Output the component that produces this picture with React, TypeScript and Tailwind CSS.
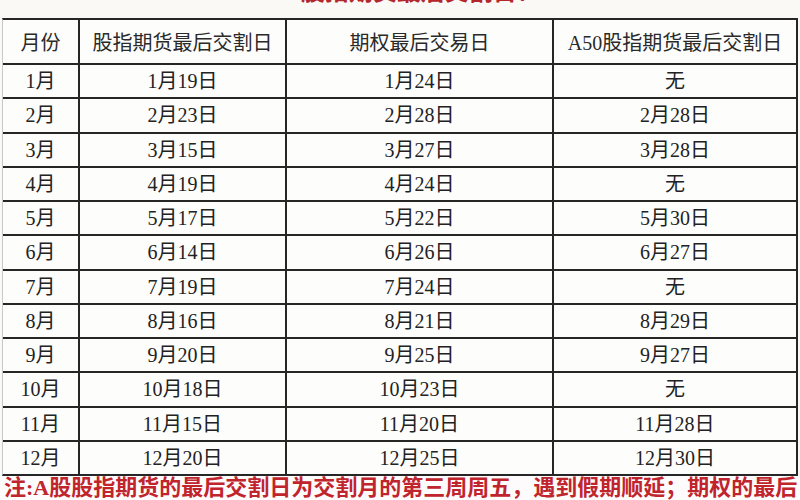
import React from "react";

const rows: [string, string, string, string][] = [
  ["1月", "1月19日", "1月24日", "无"],
  ["2月", "2月23日", "2月28日", "2月28日"],
  ["3月", "3月15日", "3月27日", "3月28日"],
  ["4月", "4月19日", "4月24日", "无"],
  ["5月", "5月17日", "5月22日", "5月30日"],
  ["6月", "6月14日", "6月26日", "6月27日"],
  ["7月", "7月19日", "7月24日", "无"],
  ["8月", "8月16日", "8月21日", "8月29日"],
  ["9月", "9月20日", "9月25日", "9月27日"],
  ["10月", "10月18日", "10月23日", "无"],
  ["11月", "11月15日", "11月20日", "11月28日"],
  ["12月", "12月20日", "12月25日", "12月30日"],
];

const headers = ["月份", "股指期货最后交割日", "期权最后交易日", "A50股指期货最后交割日"];

const serif = {
  fontFamily: '"Liberation Serif", "Noto Sans CJK SC", serif',
};

export default function App() {
  return (
    <div
      className="w-[800px] h-[500px] overflow-hidden bg-[#faf9f6] flex flex-col"
      style={serif}
    >
      <div className="h-[19px] overflow-hidden flex justify-center">
        <div className="mt-[-20px] text-[24px] leading-[24px] font-bold text-[#b3262c]">
          A50股指期货最后交割日？
        </div>
      </div>
      <div className="ml-[2px] w-[796px] border-l border-l-[#c8c8c8] border-t-2 border-r-2 border-b-2 border-t-[#262626] border-r-[#262626] border-b-[#262626] bg-[#262626] grid grid-cols-[75px_205px_265px_242px] grid-rows-[43px_repeat(12,32.25px)] gap-[2px]">
        {headers.map((h) => (
          <div
            key={h}
            className="bg-[#fdfdfc] flex items-center justify-center text-[20px] text-[#2a2a2a] pt-[2px]"
          >
            {h}
          </div>
        ))}
        {rows.map((r) =>
          r.map((c, i) => (
            <div
              key={r[0] + i}
              className="bg-[#fdfdfc] flex items-center justify-center text-[20px] text-[#222]"
            >
              {c}
            </div>
          ))
        )}
      </div>
      <div className="pl-[4px] whitespace-nowrap text-[22px] leading-[24px] font-bold text-[#c0242c] bg-[#fdfbfb]">
        注:A股股指期货的最后交割日为交割月的第三周周五，遇到假期顺延；期权的最后
      </div>
    </div>
  );
}
